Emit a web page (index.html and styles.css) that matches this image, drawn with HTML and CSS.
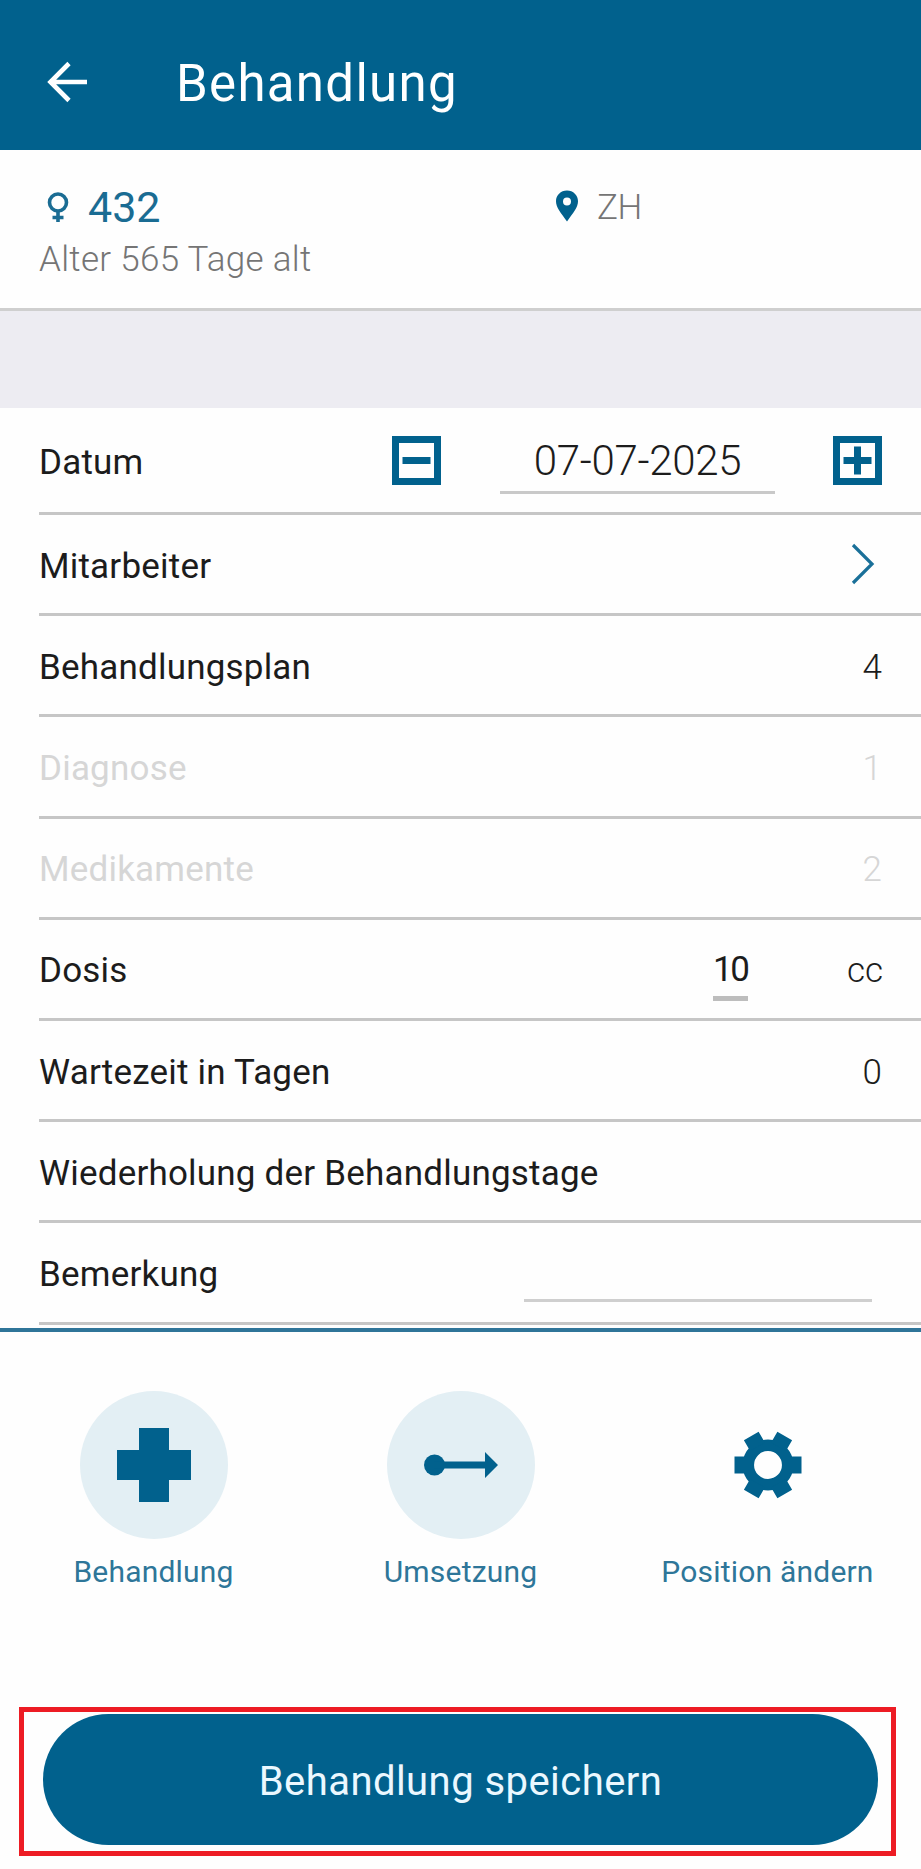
FILE: index.html
```html
<!DOCTYPE html>
<html lang="de">
<head>
  <meta charset="UTF-8">
  <title>Behandlung</title>
  <link rel="stylesheet" href="styles.css">
</head>
<body>
  <header class="topbar">
    <svg class="back" width="42" height="42" viewBox="0 0 42 42"><path d="M23 2.500L4.500 21L23 39.500M5 21H41" fill="none" stroke="#fff" stroke-width="4.600"/></svg>
    <h1>Behandlung</h1>
  </header>
  <section class="animal">
    <div class="animal-main">
      <div class="animal-id">
        <svg width="22" height="32" viewBox="0 0 22 32"><circle cx="11" cy="11.500" r="8.500"/><path d="M11 20V31M5.500 26.500H16.500"/></svg>
        <span class="number">432</span>
      </div>
      <div class="age">Alter 565 Tage alt</div>
    </div>
    <div class="location">
      <svg width="24" height="32" viewBox="0 0 24 32"><path fill="#01618d" fill-rule="evenodd" d="M12 0.500C5.700 0.500 1 5.300 1 11.300C1 17.500 5.500 22.500 12 31.500C18.500 22.500 23 17.500 23 11.300C23 5.300 18.300 0.500 12 0.500ZM12 7.500A4 4 0 1 1 12 15.500A4 4 0 1 1 12 7.500Z"/></svg>
      <span>ZH</span>
    </div>
  </section>
  <div class="spacer"></div>
  <main class="form">
    <div class="row row-date">
      <span class="label">Datum</span>
      <svg width="49" height="49" viewBox="0 0 49 49"><path d="M3.500 3.500H45.500V45.500H3.500ZM10.500 24.500H38.500"/></svg>
      <span class="date">07-07-2025</span>
      <svg width="49" height="49" viewBox="0 0 49 49"><path d="M3.500 3.500H45.500V45.500H3.500ZM10.500 24.500H38.500M24.500 10.500V38.500"/></svg>
    </div>
    <div class="row">
      <span class="label">Mitarbeiter</span>
      <svg class="chevron" width="24" height="42" viewBox="0 0 24 42"><path d="M2 2L21 21L2 40" fill="none" stroke="#1a7099" stroke-width="3.200"/></svg>
    </div>
    <div class="row"><span class="label">Behandlungsplan</span><span class="value">4</span></div>
    <div class="row disabled"><span class="label">Diagnose</span><span class="value">1</span></div>
    <div class="row disabled"><span class="label">Medikamente</span><span class="value">2</span></div>
    <div class="row"><span class="label">Dosis</span><span class="dose">10</span><span class="value unit">cc</span></div>
    <div class="row"><span class="label">Wartezeit in Tagen</span><span class="value">0</span></div>
    <div class="row"><span class="label">Wiederholung der Behandlungstage</span></div>
    <div class="row"><span class="label">Bemerkung</span><span class="note"></span></div>
  </main>
  <nav class="actions">
    <div class="action">
      <div class="circle"><svg width="74" height="74" viewBox="0 0 74 74"><path d="M22 0H52V22H74V52H52V74H22V52H0V22H22Z"/></svg></div>
      <span>Behandlung</span>
    </div>
    <div class="action">
      <div class="circle"><svg width="74" height="28" viewBox="0 0 74 28"><circle cx="10.500" cy="14" r="10.500"/><path d="M10 10.500H61V1L74 14L61 27V17.500H10Z"/></svg></div>
      <span>Umsetzung</span>
    </div>
    <div class="action">
      <div class="circle plain">
        <svg width="68" height="68" viewBox="-34 -34 68 68">
          <circle r="19.700" fill="none" stroke="#01618d" stroke-width="11.500"/>
          <path d="M-33.500 -8.500H-21V8.500H-33.500ZM33.500 -8.500H21V8.500H33.500Z"/>
          <path transform="rotate(60)" d="M-33.500 -8.500H-21V8.500H-33.500ZM33.500 -8.500H21V8.500H33.500Z"/>
          <path transform="rotate(120)" d="M-33.500 -8.500H-21V8.500H-33.500ZM33.500 -8.500H21V8.500H33.500Z"/>
        </svg>
      </div>
      <span>Position ändern</span>
    </div>
  </nav>
  <div class="save-frame">
    <button class="save">Behandlung speichern</button>
  </div>
</body>
</html>
```
FILE: styles.css
```css
* { box-sizing: border-box; }
body { margin: 0; font-family: Roboto, "Liberation Sans", sans-serif; background: #fefefe; color: #1c1c1c; }
svg { display: block; flex: none; }

.topbar { height: 150px; padding: 14px 0 0 46px; background: #01618d; display: flex; align-items: center; }
.topbar h1 { margin: 2px 0 0 88px; font-size: 51px; font-weight: 400; letter-spacing: 1.3px; color: #fff; }

.animal { height: 161px; padding: 33px 0 0 39px; border-bottom: 3px solid #cfcfcf; display: flex; }
.animal-main { width: 516px; }
.animal-id { height: 48px; display: flex; align-items: center; padding-left: 8px; }
.animal-id svg { fill: none; stroke: #1a6c93; stroke-width: 3.600; }
.number { margin-left: 19px; font-size: 43px; font-weight: 400; color: #1a6c93; }
.age { margin-top: 8px; font-size: 35px; line-height: 42px; font-weight: 300; letter-spacing: 0.3px; color: #757575; }
.location { height: 46px; display: flex; align-items: center; gap: 18px; font-size: 35px; font-weight: 300; letter-spacing: -0.5px; color: #757575; }
.location span { padding-top: 2px; }

.spacer { height: 97px; background: #edecf2; }

.form { padding-left: 39px; height: 920px; }
.row { height: 101.2px; padding-right: 39px; border-bottom: 3px solid #c6c6c6; display: flex; align-items: center; font-size: 35px; }
.row-date { height: 107px; }
.label { flex: 1; padding-top: 4px; letter-spacing: 0.2px; white-space: nowrap; }
.value { padding-top: 4px; font-weight: 300; }
.row-date svg { fill: none; stroke: #01618d; stroke-width: 7; }
.date { width: 275px; height: 59px; margin: 8px 58px 0 59px; line-height: 51px; border-bottom: 3px solid #c9c9c9; font-size: 42px; font-weight: 300; letter-spacing: -0.3px; text-align: center; }
.chevron { margin-right: 7px; }
.disabled { color: #d6d6d6; }
.dose { width: 35px; height: 55px; margin: 9px 99px 0 0; border-bottom: 5px solid #bdbdbd; letter-spacing: -2.5px; line-height: 48px; }
.unit { width: 35px; text-align: right; }
.note { width: 348px; height: 3px; margin: 56px 10px 0 0; background: #cfcfcf; }

.actions { height: 379px; padding-top: 59px; border-top: 4px solid #2f7599; display: grid; grid-template-columns: repeat(3, 1fr); }
.action { display: flex; flex-direction: column; align-items: center; font-size: 30px; letter-spacing: 0.2px; color: #2e7699; }
.circle { width: 148px; height: 148px; border-radius: 50%; background: #e3eff4; display: flex; align-items: center; justify-content: center; margin-bottom: 15px; }
.circle svg { fill: #01618d; }
.plain { background: none; }

.save-frame { margin-left: 19px; width: 877px; height: 149px; border: 5px solid #ed1c24; padding: 2px 13px 0 19px; }
.save { display: block; width: 100%; height: 131px; padding: 4px 0 0; border: 0; border-radius: 66px; background: #01618d; color: #ebf8ff; font-family: inherit; font-size: 40px; font-weight: 400; letter-spacing: 0.45px; }
```
